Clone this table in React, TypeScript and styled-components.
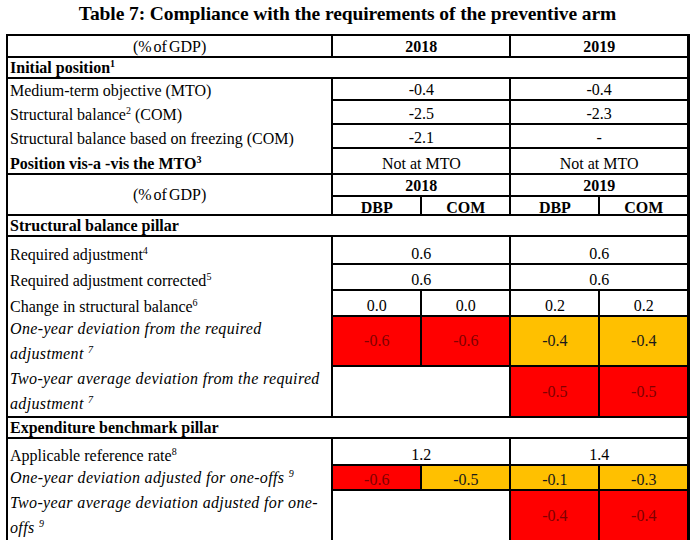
import React from 'react';
import styled, { createGlobalStyle, css } from 'styled-components';

const Global = createGlobalStyle`
  html, body { margin: 0; padding: 0; background: #fff; }
  body { font-family: "Liberation Serif", "Times New Roman", serif; color: #000; }
`;

const Page = styled.div`
  width: 695px;
  height: 540px;
  overflow: hidden;
  background: #fff;
`;

const Title = styled.h1`
  margin: 0;
  height: 34px;
  box-sizing: border-box;
  padding-top: 3px;
  font-size: 19.5px;
  line-height: 22px;
  letter-spacing: -0.1px;
  font-weight: bold;
  text-align: center;
`;

const Table = styled.table`
  margin-left: 6px;
  width: 684px;
  table-layout: fixed;
  border-collapse: collapse;
  border: 2px solid #000;
  border-right-width: 3px;
  font-size: 16px;
`;

const LabelCol = styled.col`width: 325px;`;
const SubCol = styled.col`width: 89px;`;

const Row = styled.tr<{ $h: number }>`
  height: ${(p) => p.$h}px;
`;

const cellBase = css`
  padding: 0 2px;
  line-height: 18px;
  vertical-align: bottom;
  white-space: nowrap;
`;

const Label = styled.td<{ $bold?: boolean; $italic?: boolean }>`
  ${cellBase}
  text-align: left;
  border-left: 2px solid #000;
  border-right: 2px solid #000;
  border-top: none;
  border-bottom: none;
  font-weight: ${(p) => (p.$bold ? 'bold' : 'normal')};
  ${(p) =>
    p.$italic &&
    css`
      font-style: italic;
      letter-spacing: 0.35px;
      line-height: 25px;
      vertical-align: top;
    `}
`;

const Section = styled.td`
  ${cellBase}
  font-weight: bold;
  text-align: left;
  border: 2px solid #000;
`;

const HeadLabel = styled.td<{ $mid?: boolean }>`
  ${cellBase}
  text-align: center;
  border: 2px solid #000;
  word-spacing: -2px;
  vertical-align: ${(p) => (p.$mid ? 'middle' : 'bottom')};
`;

const Year = styled.td<{ $tight?: boolean }>`
  ${cellBase}
  text-align: center;
  font-weight: bold;
  border: 2px solid #000;
  line-height: ${(p) => (p.$tight ? '13px' : '18px')};
`;

type Tone = 'red' | 'amber' | undefined;

const Val = styled.td<{ $tone?: Tone; $mid?: boolean }>`
  ${cellBase}
  text-align: center;
  border: 2px solid #000;
  vertical-align: ${(p) => (p.$mid ? 'middle' : 'bottom')};
  background: ${(p) => (p.$tone === 'red' ? '#ff0000' : p.$tone === 'amber' ? '#ffc000' : '#fff')};
  color: ${(p) => (p.$tone === 'red' ? '#800000' : p.$tone === 'amber' ? '#1a1a1a' : '#000')};
`;

const Sup = styled.sup`
  font-size: 10px;
  line-height: 0;
  vertical-align: 6px;
  letter-spacing: 0;
`;

export default function App() {
  return (
    <Page>
      <Global />
      <Title>Table 7: Compliance with the requirements of the preventive arm</Title>
      <Table>
        <colgroup>
          <LabelCol />
          <SubCol />
          <SubCol />
          <SubCol />
          <SubCol />
        </colgroup>
        <tbody>
          <Row $h={22}>
            <HeadLabel>(% of GDP)</HeadLabel>
            <Year colSpan={2}>2018</Year>
            <Year colSpan={2}>2019</Year>
          </Row>
          <Row $h={21}>
            <Section colSpan={5}>
              Initial position<Sup>1</Sup>
            </Section>
          </Row>
          <Row $h={22}>
            <Label>Medium-term objective (MTO)</Label>
            <Val colSpan={2}>-0.4</Val>
            <Val colSpan={2}>-0.4</Val>
          </Row>
          <Row $h={24}>
            <Label>
              Structural balance<Sup>2</Sup> (COM)
            </Label>
            <Val colSpan={2}>-2.5</Val>
            <Val colSpan={2}>-2.3</Val>
          </Row>
          <Row $h={24}>
            <Label>Structural balance based on freezing (COM)</Label>
            <Val colSpan={2}>-2.1</Val>
            <Val colSpan={2}>-</Val>
          </Row>
          <Row $h={26}>
            <Label $bold>
              Position vis-a -vis the MTO<Sup>3</Sup>
            </Label>
            <Val colSpan={2}>Not at MTO</Val>
            <Val colSpan={2}>Not at MTO</Val>
          </Row>
          <Row $h={22}>
            <HeadLabel rowSpan={2} $mid>
              (% of GDP)
            </HeadLabel>
            <Year colSpan={2}>2018</Year>
            <Year colSpan={2}>2019</Year>
          </Row>
          <Row $h={19}>
            <Year $tight>DBP</Year>
            <Year $tight>COM</Year>
            <Year $tight>DBP</Year>
            <Year $tight>COM</Year>
          </Row>
          <Row $h={21}>
            <Section colSpan={5}>Structural balance pillar</Section>
          </Row>
          <Row $h={28}>
            <Label>
              Required adjustment<Sup>4</Sup>
            </Label>
            <Val colSpan={2}>0.6</Val>
            <Val colSpan={2}>0.6</Val>
          </Row>
          <Row $h={26}>
            <Label>
              Required adjustment corrected<Sup>5</Sup>
            </Label>
            <Val colSpan={2}>0.6</Val>
            <Val colSpan={2}>0.6</Val>
          </Row>
          <Row $h={26}>
            <Label>
              Change in structural balance<Sup>6</Sup>
            </Label>
            <Val>0.0</Val>
            <Val>0.0</Val>
            <Val>0.2</Val>
            <Val>0.2</Val>
          </Row>
          <Row $h={49}>
            <Label $italic>
              One-year deviation from the required
              <br />
              adjustment <Sup>7</Sup>
            </Label>
            <Val $tone="red" $mid>-0.6</Val>
            <Val $tone="red" $mid>-0.6</Val>
            <Val $tone="amber" $mid>-0.4</Val>
            <Val $tone="amber" $mid>-0.4</Val>
          </Row>
          <Row $h={48}>
            <Label $italic>
              Two-year average deviation from the required
              <br />
              adjustment <Sup>7</Sup>
            </Label>
            <Val colSpan={2} $mid />
            <Val $tone="red" $mid>-0.5</Val>
            <Val $tone="red" $mid>-0.5</Val>
          </Row>
          <Row $h={21}>
            <Section colSpan={5}>Expenditure benchmark pillar</Section>
          </Row>
          <Row $h={27}>
            <Label>
              Applicable reference rate<Sup>8</Sup>
            </Label>
            <Val colSpan={2}>1.2</Val>
            <Val colSpan={2}>1.4</Val>
          </Row>
          <Row $h={25}>
            <Label $italic>
              One-year deviation adjusted for one-offs <Sup>9</Sup>
            </Label>
            <Val $tone="red">-0.6</Val>
            <Val $tone="amber">-0.5</Val>
            <Val $tone="amber">-0.1</Val>
            <Val $tone="amber">-0.3</Val>
          </Row>
          <Row $h={50}>
            <Label $italic>
              Two-year average deviation adjusted for one-
              <br />
              offs <Sup>9</Sup>
            </Label>
            <Val colSpan={2} $mid />
            <Val $tone="red" $mid>-0.4</Val>
            <Val $tone="red" $mid>-0.4</Val>
          </Row>
        </tbody>
      </Table>
    </Page>
  );
}
